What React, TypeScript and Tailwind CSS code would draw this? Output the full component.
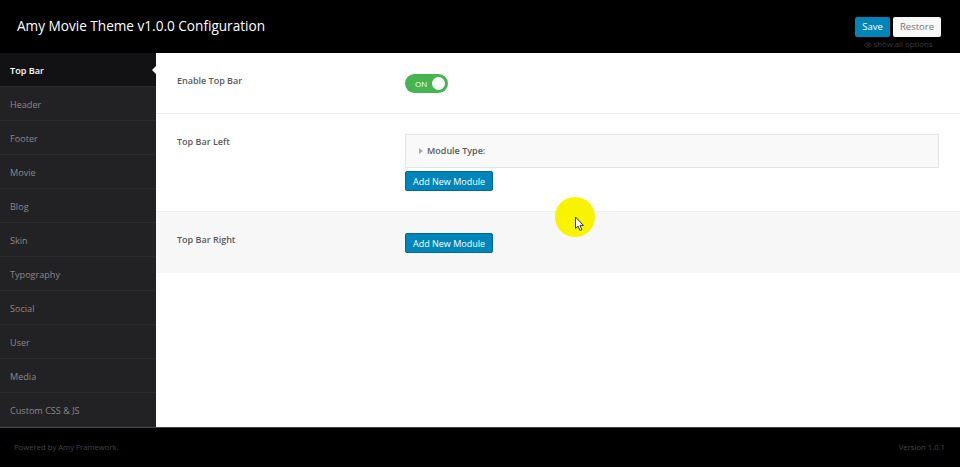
import { Eye } from "lucide-react";

const menuItems = [
  "Top Bar",
  "Header",
  "Footer",
  "Movie",
  "Blog",
  "Skin",
  "Typography",
  "Social",
  "User",
  "Media",
  "Custom CSS & JS",
];

function AddButton() {
  return (
    <button className="w-[88px] h-5 rounded-[2px] bg-[#0085ba] border border-[#006799] text-white text-[9px] font-medium leading-none whitespace-nowrap">
      Add New Module
    </button>
  );
}

export default function App() {
  return (
    <div className="relative w-[960px] h-[469px] overflow-hidden bg-white font-['Open_Sans',sans-serif]">
      {/* Header */}
      <div className="h-[53px] bg-black flex justify-between pl-[17px] pr-[19px]">
        <h1 className="text-white text-[13.6px] leading-none pt-[19px] font-normal">
          Amy Movie Theme v1.0.0 Configuration
        </h1>
        <div className="flex flex-col items-center pt-[17px]">
          <div className="flex gap-[3px]">
            <button className="w-[35px] h-[20px] rounded-[2px] bg-[#0085ba] text-white text-[9.5px] font-medium leading-none">
              Save
            </button>
            <button className="w-[48px] h-[20px] rounded-[2px] bg-[#f7f7f7] text-[#777] text-[9.5px] leading-none">
              Restore
            </button>
          </div>
          <div className="flex items-center gap-[2px] mt-[2px] text-[#3c3c3c] text-[7.8px] leading-[11px]">
            <Eye className="w-2 h-2" />
            <span>show all options</span>
          </div>
        </div>
      </div>

      {/* Body */}
      <div className="flex h-[374px]">
        <nav className="w-[156px] shrink-0 bg-[#222123] flex flex-col">
          {menuItems.map((item, i) => (
            <div
              key={item}
              className={`relative h-[34px] flex items-center pl-[10px] pt-[2px] text-[9.1px] border-b border-[#2a292b] ${
                i === 0
                  ? "bg-[#121113] text-white font-semibold"
                  : "text-[#8a898b]"
              }`}
            >
              {item}
              {i === 0 && (
                <span className="absolute right-0 top-[13px] w-0 h-0 border-y-[4px] border-y-transparent border-r-[4px] border-r-white" />
              )}
            </div>
          ))}
        </nav>

        <main className="flex-1 flex flex-col">
          <section className="h-[61px] flex border-b border-[#eeeef0] pt-[21px] pl-[21px]">
            <div className="w-[228px] text-[9px] font-semibold text-[#5a5a5a] leading-[13px]">
              Enable Top Bar
            </div>
            <div className="relative w-[43px] h-[19px] rounded-full bg-[#46b450] text-white text-[8px] leading-[19px] pl-[10px]">
              ON
              <span className="absolute right-[3px] top-[3px] w-[13px] h-[13px] rounded-full bg-white" />
            </div>
          </section>

          <section className="h-[97px] flex pt-[20px] pl-[21px] pr-[21px]">
            <div className="w-[228px] pt-px text-[9px] font-semibold text-[#5a5a5a] leading-[13px]">
              Top Bar Left
            </div>
            <div className="flex-1">
              <div className="h-[34px] bg-[#f9f9f9] border border-[#e5e5e5] flex items-center pl-[13px] gap-[4px] text-[9px] font-semibold text-[#5a5a5a]">
                <span className="w-0 h-0 border-y-[3.5px] border-y-transparent border-l-[4px] border-l-[#aaa]" />
                Module Type:
              </div>
              <div className="flex mt-[3px]">
                <AddButton />
              </div>
            </div>
          </section>

          <section className="h-[62px] flex items-start bg-[#f7f7f8] border-t border-[#f0f0f1] pt-[21px] pl-[21px]">
            <div className="w-[228px] text-[9px] font-semibold text-[#5a5a5a] leading-[13px]">
              Top Bar Right
            </div>
            <AddButton />
          </section>
        </main>
      </div>

      {/* Footer */}
      <div className="h-[40px] bg-black border-t border-[#444] flex items-center justify-between pl-[14px] pr-[15px] text-[#444] text-[7.7px]">
        <span>Powered by Amy Framework.</span>
        <span>Version 1.0.1</span>
      </div>

      {/* Recorded cursor highlight */}
      <div className="absolute left-[555px] top-[197px] w-10 h-10 rounded-full bg-[#f8f400]" />
      <svg
        className="absolute left-[574px] top-[216px]"
        width="11"
        height="16"
        viewBox="0 0 11 16"
      >
        <path
          d="M1.5 1v11.5l2.6-2.4 1.9 4.4 1.9-.8-1.9-4.3h3.4z"
          fill="#fff"
          stroke="#333"
          strokeWidth="1"
        />
      </svg>
    </div>
  );
}
